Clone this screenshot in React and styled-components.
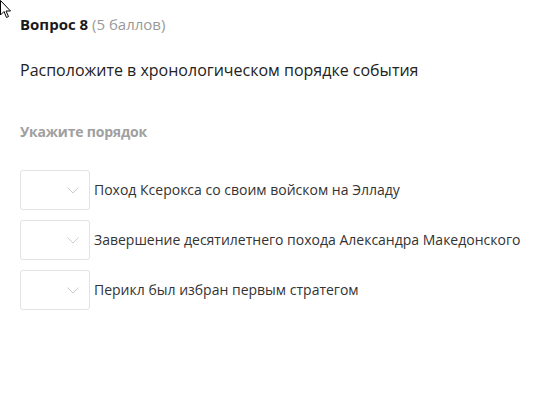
import React from "react";
import styled, { createGlobalStyle } from "styled-components";

const Global = createGlobalStyle`
  html, body { margin: 0; padding: 0; background: #fff; }
  body { font-family: "Open Sans", "Noto Sans", sans-serif; color: #333; }
`;

const Page = styled.div`
  position: relative;
  width: 559px;
  height: 408px;
  padding: 14px 20px 0;
  box-sizing: border-box;
`;

const Title = styled.div`
  font-size: 15px;
  line-height: 20px;
  font-weight: 700;
  color: #1a1a1a;
  span { font-weight: 400; color: #9a9a9a; }
`;

const Question = styled.div`
  margin-top: 25px;
  font-size: 16px;
  line-height: 22px;
  color: #222;
`;

const Hint = styled.div`
  margin-top: 41px;
  font-size: 14px;
  line-height: 20px;
  font-weight: 700;
  letter-spacing: -0.2px;
  color: #a0a0a0;
`;

const List = styled.div`
  margin-top: 28px;
  display: flex;
  flex-direction: column;
  gap: 10px;
`;

const Row = styled.div`
  display: flex;
  align-items: center;
  gap: 4px;
`;

const Select = styled.div`
  width: 70px;
  height: 40px;
  box-sizing: border-box;
  border: 1px solid #e3e3e3;
  border-radius: 3px;
  display: flex;
  align-items: center;
  justify-content: flex-end;
  padding-right: 10px;
`;

const Label = styled.div`
  font-size: 14px;
  line-height: 20px;
  color: #333;
`;

const Cursor = styled.svg`
  position: absolute;
  left: 0;
  top: 0;
`;

const Chevron = () => (
  <svg width="12" height="7" viewBox="0 0 12 7">
    <path d="M0.5 0.5 L6 6 L11.5 0.5" fill="none" stroke="#cccccc" strokeWidth="1" />
  </svg>
);

const items = [
  "Поход Ксерокса со своим войском на Элладу",
  "Завершение десятилетнего похода Александра Македонского",
  "Перикл был избран первым стратегом",
];

export default function App() {
  return (
    <>
      <Global />
      <Page>
        <Cursor width="13" height="20" viewBox="0 0 13 20">
          <path d="M0.5 0.5 L0.5 15 L4 11.5 L6.5 17.5 L8.5 16.5 L6 11 L10.5 11 Z" fill="#fff" stroke="#000" strokeWidth="1" />
        </Cursor>
        <Title>Вопрос 8 <span>(5 баллов)</span></Title>
        <Question>Расположите в хронологическом порядке события</Question>
        <Hint>Укажите порядок</Hint>
        <List>
          {items.map((t) => (
            <Row key={t}>
              <Select><Chevron /></Select>
              <Label>{t}</Label>
            </Row>
          ))}
        </List>
      </Page>
    </>
  );
}
